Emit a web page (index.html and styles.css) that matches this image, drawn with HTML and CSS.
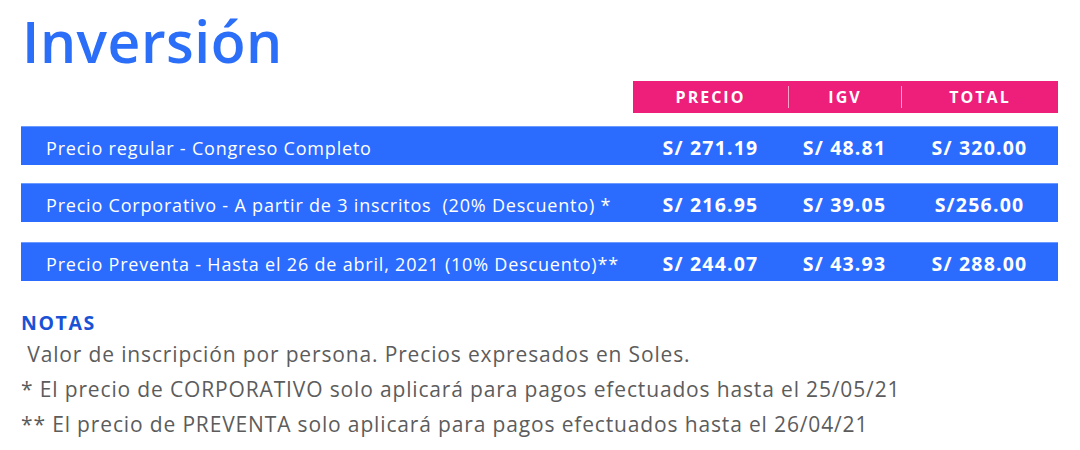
FILE: index.html
```html
<!DOCTYPE html>
<html lang="es">
<head>
  <meta charset="UTF-8" />
  <meta name="viewport" content="width=device-width, initial-scale=1.0" />
  <title>Inversión</title>
  <link rel="stylesheet" href="styles.css">
</head>
<body>
  <div class="container">
    <h1 class="title">Inversión</h1>

    <div class="price-table">
      <div class="head">
        <div class="blank"></div>
        <div class="head-cells">
          <div class="cell">PRECIO</div>
          <div class="cell">IGV</div>
          <div class="cell">TOTAL</div>
        </div>
      </div>

      <div class="row">
        <div class="label">Precio regular - Congreso Completo</div>
        <div class="cell">S/ 271.19</div>
        <div class="cell">S/ 48.81</div>
        <div class="cell">S/ 320.00</div>
      </div>
      <div class="row">
        <div class="label">Precio Corporativo - A partir de 3 inscritos &nbsp;(20% Descuento) *</div>
        <div class="cell">S/ 216.95</div>
        <div class="cell">S/ 39.05</div>
        <div class="cell">S/256.00</div>
      </div>
      <div class="row">
        <div class="label">Precio Preventa - Hasta el 26 de abril, 2021 (10% Descuento)**</div>
        <div class="cell">S/ 244.07</div>
        <div class="cell">S/ 43.93</div>
        <div class="cell">S/ 288.00</div>
      </div>
    </div>

    <div class="notes">
      <h3 class="notes-title">NOTAS</h3>
      <p>&nbsp;Valor de inscripción por persona. Precios expresados en Soles.</p>
      <p>* El precio de CORPORATIVO solo aplicará para pagos efectuados hasta el 25/05/21</p>
      <p>** El precio de PREVENTA solo aplicará para pagos efectuados hasta el 26/04/21</p>
    </div>
  </div>
</body>
</html>
```

FILE: styles.css
```css
* {
  margin: 0;
  padding: 0;
  box-sizing: border-box;
  font-family: 'Open Sans', sans-serif;
}

body {
  background: #ffffff;
}

.container {
  padding: 8px 22px 0 21px;
}

.title {
  font-size: 57px;
  font-weight: 600;
  color: #2b6ef8;
  line-height: 66px;
  letter-spacing: 0.5px;
  margin-left: 1px;
}

.price-table {
  margin-top: 7px;
}

.head,
.row {
  display: grid;
  grid-template-columns: 612px 155px 113px 157px;
}

.head-cells {
  grid-column: 2 / 5;
  display: grid;
  grid-template-columns: 155px 113px 157px;
  background: #ee1e7b;
  height: 32px;
  align-items: center;
}

.head-cells .cell {
  color: #ffffff;
  font-weight: 700;
  font-size: 16px;
  text-align: center;
  letter-spacing: 2px;
  border-left: 1px solid rgba(255, 255, 255, 0.6);
  line-height: 22px;
}

.head-cells .cell:first-child {
  border-left: none;
}

.row {
  background: #2b6cff;
  height: 39px;
  align-items: center;
  border-top: 1px solid #6b9bff;
  color: #ffffff;
  padding-top: 3px;
}

.row:nth-child(2) {
  margin-top: 13px;
}

.row:nth-child(3) {
  margin-top: 18px;
}

.row:nth-child(4) {
  margin-top: 20px;
}

.label {
  padding-left: 25px;
  font-size: 18px;
  font-weight: 500;
  letter-spacing: 0.8px;
}

.row .cell {
  text-align: center;
  font-size: 19.5px;
  font-weight: 700;
  letter-spacing: 1.2px;
}

.notes {
  margin-top: 30px;
}

.notes-title {
  color: #1a52d6;
  font-size: 19.5px;
  font-weight: 700;
  line-height: 24px;
  letter-spacing: 1.6px;
}

.notes p {
  color: #5c5c5c;
  font-size: 21px;
  line-height: 35px;
  letter-spacing: 0.85px;
}

.notes p:first-of-type {
  margin-top: 2px;
}
```
